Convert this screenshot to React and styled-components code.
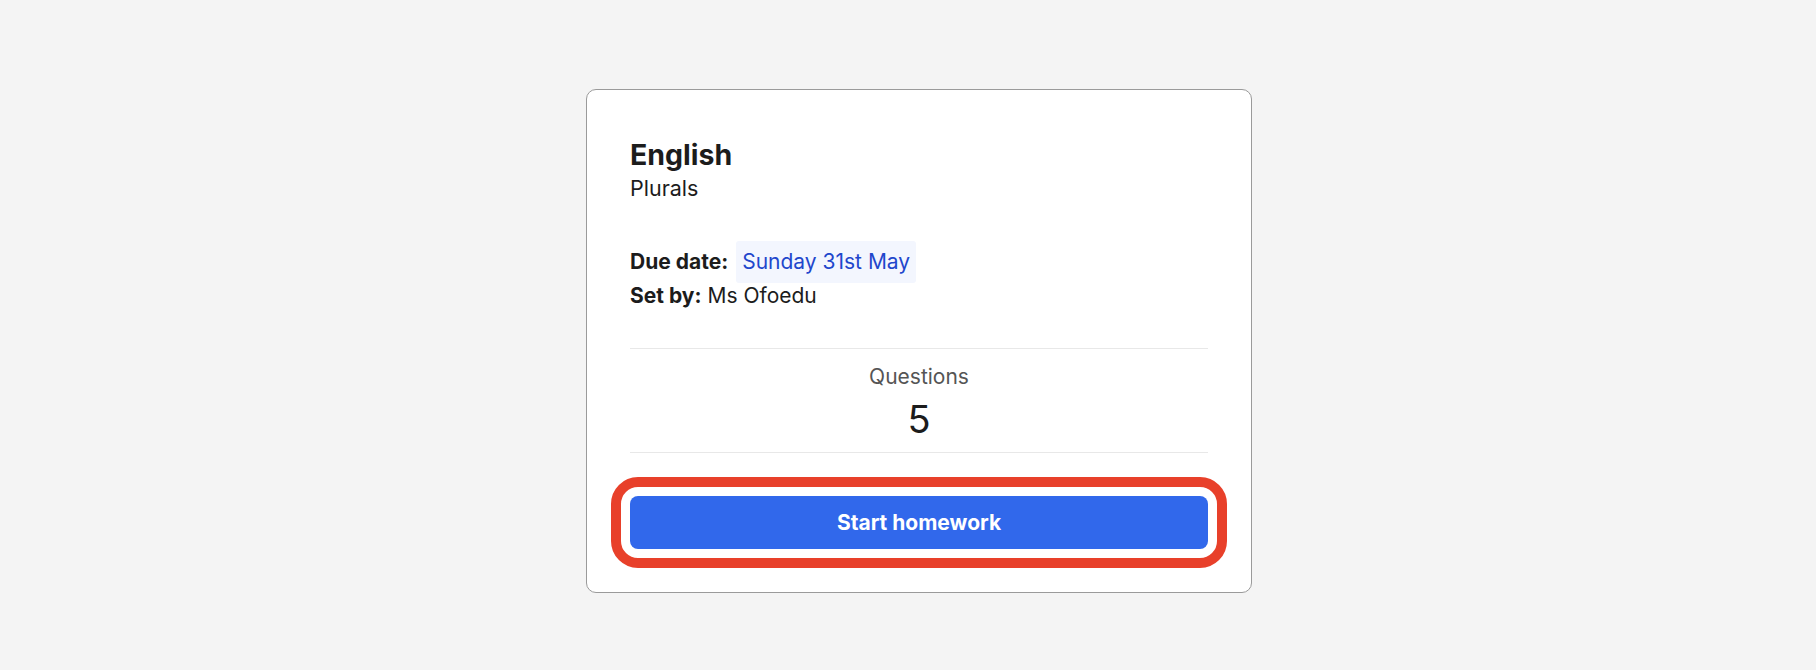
import styled, { createGlobalStyle } from "styled-components";

const GlobalStyle = createGlobalStyle`
    body {
        margin: 0;
        background: #f4f4f4;
        font-family: Inter, "Noto Sans", sans-serif;
        color: #1c1c1c;
    }
`

const Page = styled.div`
    display: flex;
    justify-content: center;
    align-items: flex-start;
    padding: 89px 0 0 22px;
    min-height: 100vh;
    box-sizing: border-box;
`

const Card = styled.div`
    width: 666px;
    box-sizing: border-box;
    padding: 47px 43px 43px;
    background: #fff;
    border: 1px solid #9a9a9a;
    border-radius: 10px;
`

const Title = styled.h2`
    margin: 0;
    font-size: 28.5px;
    line-height: 36px;
    font-weight: 700;
`

const Subtitle = styled.div`
    font-size: 21.5px;
    line-height: 30px;
`

const Meta = styled.div`
    margin-top: 38px;
    font-size: 21px;
`

const MetaRow = styled.div`
    display: flex;
    align-items: center;
    line-height: ${p => p.tall ? "42px" : "26px"};
`

const Label = styled.span`
    font-weight: 700;
    margin-right: ${p => p.gap || 6}px;
`

const DateTag = styled.span`
    padding: 0 6px;
    background: #f3f6fe;
    color: #1f47cc;
    border-radius: 3px;
`

const Stats = styled.div`
    margin-top: 39px;
    padding: 14px 0 11px;
    border-top: 1px solid #e8e8e8;
    border-bottom: 1px solid #e8e8e8;
    text-align: center;
`

const StatLabel = styled.div`
    font-size: 21px;
    line-height: 28px;
    color: #555;
`

const StatValue = styled.div`
    margin-top: 6px;
    font-size: 38px;
    line-height: 44px;
`

const Button = styled.button`
    display: block;
    width: 100%;
    height: 53px;
    margin-top: 43px;
    border: none;
    border-radius: 8px;
    background: #3168eb;
    color: #fff;
    font-family: inherit;
    font-size: 21px;
    font-weight: 700;
    cursor: pointer;
    outline: 10px solid #e8402a;
    outline-offset: 9px;
`

function App() {
    return (
        <Page>
            <GlobalStyle />
            <Card>
                <Title>English</Title>
                <Subtitle>Plurals</Subtitle>

                <Meta>
                    <MetaRow tall>
                        <Label gap={8}>Due date:</Label>
                        <DateTag>Sunday 31st May</DateTag>
                    </MetaRow>
                    <MetaRow>
                        <Label>Set by:</Label>
                        Ms Ofoedu
                    </MetaRow>
                </Meta>

                <Stats>
                    <StatLabel>Questions</StatLabel>
                    <StatValue>5</StatValue>
                </Stats>

                <Button>Start homework</Button>
            </Card>
        </Page>
    )
}

export default App;
